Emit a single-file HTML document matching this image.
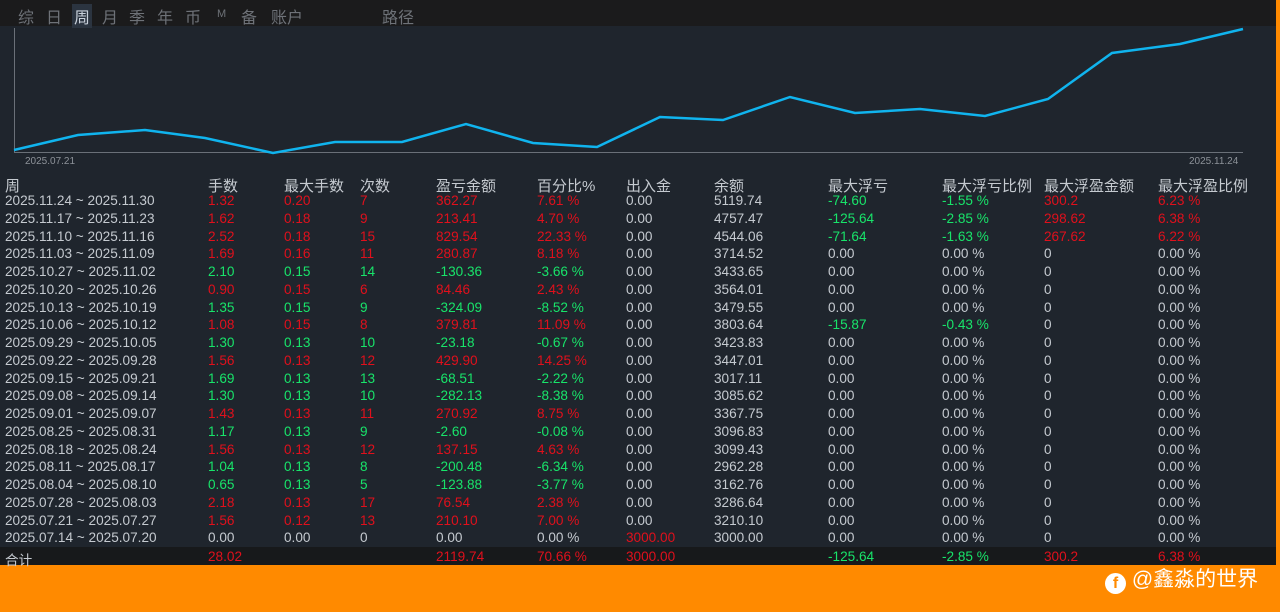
<!DOCTYPE html><html><head><meta charset="utf-8"><style>
body{margin:0;width:1280px;height:612px;background:#ff8a00;position:relative;overflow:hidden;font-family:"Liberation Sans","Noto Sans CJK SC",sans-serif}
#panel{position:absolute;left:0;top:0;width:1276px;height:565px;background:#1f252d}
#top{position:absolute;left:0;top:0;width:1276px;height:26px;background:#1b1b1c;color:#6e7278;font-size:16px}
#top span{position:absolute;top:4px}
.r{position:absolute;left:0;height:18px;font-size:13.6px;color:#c5cad0;width:1276px}
.r span{position:absolute;top:1px;white-space:nowrap}
.R{color:#e0101c}.G{color:#18e46a}
</style></head><body><div id="panel"></div>
<div id="top"><span style="left:18px">综</span><span style="left:46px">日</span><span style="left:72px;background:#2b3440;color:#c8d0da;padding:0 2px">周</span><span style="left:102px">月</span><span style="left:129px">季</span><span style="left:157px">年</span><span style="left:185px">币</span><span style="left:217px;font-size:11px;top:8px">M</span><span style="left:241px">备</span><span style="left:271px">账户</span><span style="left:382px">路径</span></div>
<svg style="position:absolute;left:0;top:0" width="1280" height="175">
<line x1="14.5" y1="28" x2="14.5" y2="152" stroke="#6a7078"/><line x1="14" y1="152.5" x2="1243" y2="152.5" stroke="#6a7078"/>
<polyline fill="none" stroke="#10b4ee" stroke-width="2.5" points="14,150 78,135 145,130 205,138 273,153 335,142 402,142 466,124 533,143 597,147 660,117 723,120 790,97 855,113 920,109 985,116 1048,99 1112,53 1180,44 1243,29"/>
<text x="25" y="164" fill="#8d9299" font-size="10">2025.07.21</text><text x="1189" y="164" fill="#8d9299" font-size="10">2025.11.24</text>
</svg>
<div class="r" style="top:174px;font-size:15px"><span style="left:5px">周</span><span style="left:208px">手数</span><span style="left:284px">最大手数</span><span style="left:360px">次数</span><span style="left:436px">盈亏金额</span><span style="left:537px">百分比%</span><span style="left:626px">出入金</span><span style="left:714px">余额</span><span style="left:828px">最大浮亏</span><span style="left:942px">最大浮亏比例</span><span style="left:1044px">最大浮盈金额</span><span style="left:1158px">最大浮盈比例</span></div>
<div id="rows"></div>
<div style="position:absolute;left:0;top:547px;width:1276px;height:18px;background:#17191b"></div>
<div style="position:absolute;left:1105px;top:563px;color:#fff;font-size:21px;font-family:'Liberation Sans','Noto Sans CJK SC',sans-serif"><span style="display:inline-block;width:21px;height:21px;border-radius:11px;background:#fff;color:#ff8a00;font-size:16px;text-align:center;line-height:21px;font-weight:bold;vertical-align:-2px">f</span> @鑫淼的世界</div>
<script>
const d=[
["2025.11.24 ~ 2025.11.30","1.32","0.20","7","362.27","7.61 %","0.00","5119.74","-74.60","-1.55 %","300.2","6.23 %"],
["2025.11.17 ~ 2025.11.23","1.62","0.18","9","213.41","4.70 %","0.00","4757.47","-125.64","-2.85 %","298.62","6.38 %"],
["2025.11.10 ~ 2025.11.16","2.52","0.18","15","829.54","22.33 %","0.00","4544.06","-71.64","-1.63 %","267.62","6.22 %"],
["2025.11.03 ~ 2025.11.09","1.69","0.16","11","280.87","8.18 %","0.00","3714.52","0.00","0.00 %","0","0.00 %"],
["2025.10.27 ~ 2025.11.02","2.10","0.15","14","-130.36","-3.66 %","0.00","3433.65","0.00","0.00 %","0","0.00 %"],
["2025.10.20 ~ 2025.10.26","0.90","0.15","6","84.46","2.43 %","0.00","3564.01","0.00","0.00 %","0","0.00 %"],
["2025.10.13 ~ 2025.10.19","1.35","0.15","9","-324.09","-8.52 %","0.00","3479.55","0.00","0.00 %","0","0.00 %"],
["2025.10.06 ~ 2025.10.12","1.08","0.15","8","379.81","11.09 %","0.00","3803.64","-15.87","-0.43 %","0","0.00 %"],
["2025.09.29 ~ 2025.10.05","1.30","0.13","10","-23.18","-0.67 %","0.00","3423.83","0.00","0.00 %","0","0.00 %"],
["2025.09.22 ~ 2025.09.28","1.56","0.13","12","429.90","14.25 %","0.00","3447.01","0.00","0.00 %","0","0.00 %"],
["2025.09.15 ~ 2025.09.21","1.69","0.13","13","-68.51","-2.22 %","0.00","3017.11","0.00","0.00 %","0","0.00 %"],
["2025.09.08 ~ 2025.09.14","1.30","0.13","10","-282.13","-8.38 %","0.00","3085.62","0.00","0.00 %","0","0.00 %"],
["2025.09.01 ~ 2025.09.07","1.43","0.13","11","270.92","8.75 %","0.00","3367.75","0.00","0.00 %","0","0.00 %"],
["2025.08.25 ~ 2025.08.31","1.17","0.13","9","-2.60","-0.08 %","0.00","3096.83","0.00","0.00 %","0","0.00 %"],
["2025.08.18 ~ 2025.08.24","1.56","0.13","12","137.15","4.63 %","0.00","3099.43","0.00","0.00 %","0","0.00 %"],
["2025.08.11 ~ 2025.08.17","1.04","0.13","8","-200.48","-6.34 %","0.00","2962.28","0.00","0.00 %","0","0.00 %"],
["2025.08.04 ~ 2025.08.10","0.65","0.13","5","-123.88","-3.77 %","0.00","3162.76","0.00","0.00 %","0","0.00 %"],
["2025.07.28 ~ 2025.08.03","2.18","0.13","17","76.54","2.38 %","0.00","3286.64","0.00","0.00 %","0","0.00 %"],
["2025.07.21 ~ 2025.07.27","1.56","0.12","13","210.10","7.00 %","0.00","3210.10","0.00","0.00 %","0","0.00 %"],
["2025.07.14 ~ 2025.07.20","0.00","0.00","0","0.00","0.00 %","3000.00","3000.00","0.00","0.00 %","0","0.00 %"]];
const X=[5,208,284,360,436,537,626,714,828,942,1044,1158];let h="";
d.forEach((r,i)=>{const v=parseFloat(r[4]);const c=v>0?"R":v<0?"G":"";h+=`<div class="r" style="top:${192+i*17.75}px">`;
r.forEach((t,j)=>{let k="";if(j>=1&&j<=5)k=c;if(j==6&&t!="0.00")k="R";if((j==8||j==9)&&t!="0.00"&&t!="0.00 %")k="G";if((j==10||j==11)&&t!="0"&&t!="0.00 %")k="R";h+=`<span class="${k}" style="left:${X[j]}px">${t}</span>`});h+="</div>"});
h+=`<div class="r" style="top:548px;z-index:2"><span style="left:5px">合计</span><span class="R" style="left:208px">28.02</span><span class="R" style="left:436px">2119.74</span><span class="R" style="left:537px">70.66 %</span><span class="R" style="left:626px">3000.00</span><span class="G" style="left:828px">-125.64</span><span class="G" style="left:942px">-2.85 %</span><span class="R" style="left:1044px">300.2</span><span class="R" style="left:1158px">6.38 %</span></div>`;
document.getElementById("rows").innerHTML=h;
</script></body></html>
